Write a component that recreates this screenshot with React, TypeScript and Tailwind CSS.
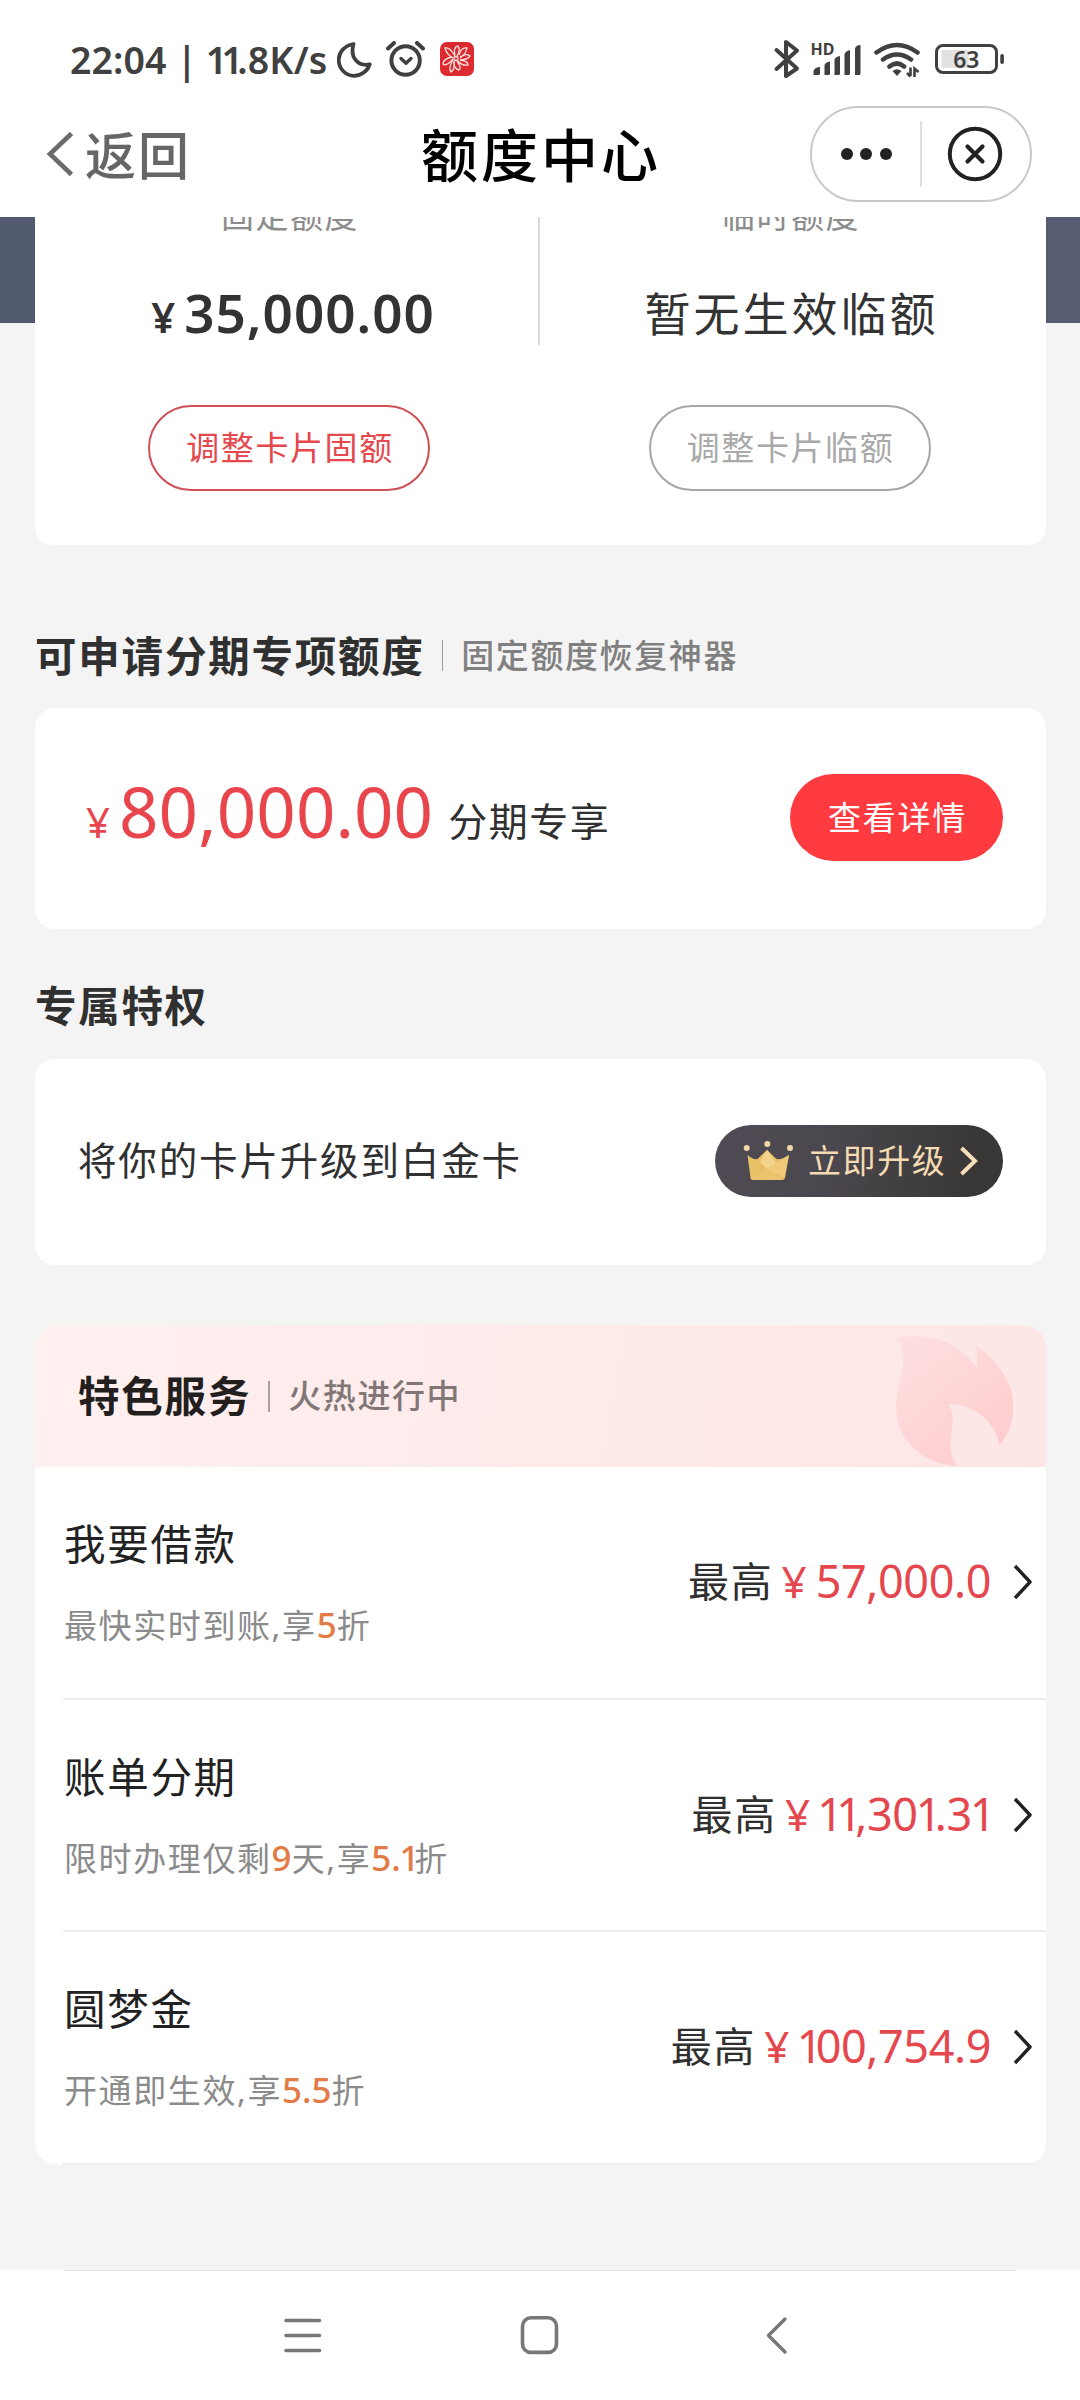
import React from "react";

/* Sets runs of the figure "1" tighter than the other digits. */
function Num({ children }: { children: string }) {
  return (
    <>
      {children.split(/(1+)/).map((part, i) =>
        part.startsWith("1") ? (
          <span key={i} className="-ml-[0.04em] tracking-[-0.15em]">
            {part}
          </span>
        ) : (
          <React.Fragment key={i}>{part}</React.Fragment>
        ),
      )}
    </>
  );
}

function StatusBar() {
  return (
    <div className="flex h-[92px] items-start pt-[36px] pl-[70px] text-[#404040]">
      <div className="h-[46px] w-[267px] whitespace-pre text-[37.5px] leading-[47px] font-semibold tracking-[0.1px]">
        22:04 | <Num>11</Num>.8K/s
      </div>
      <svg className="mt-[5px] h-[38px] w-[140px]" viewBox="337 41 140 38" fill="none">
        <path
          d="M353.500 44C343 46 338.700 53.500 338.700 60C338.700 69 346 75.800 354 75.800C361.500 75.800 367.500 71 369.700 64.300C359 67 349.500 58.500 353.500 44Z"
          stroke="#404040"
          strokeWidth="3.800"
          strokeLinejoin="round"
        />
        <circle cx="405.600" cy="60.500" r="14.200" stroke="#404040" strokeWidth="4" />
        <path d="M388 48.500L394 43M423 48.500L417 43" stroke="#404040" strokeWidth="4" strokeLinecap="round" />
        <path d="M401 58.500L406 63.300L411 58.500" stroke="#404040" strokeWidth="3.400" strokeLinecap="round" strokeLinejoin="round" />
        <rect x="440" y="42" width="34" height="34" rx="7" fill="#db2a30" />
        <g stroke="#ffe2e0" strokeWidth="1.300">
          <path d="M455 56Q450 47 445 48Q447 55 453 58" />
          <path d="M455 55Q453 47 458 46Q461 50 457 56" />
          <path d="M459 55Q461 47 467 48Q466 54 460 58" />
          <path d="M460 57Q467 53 470 56Q467 60 460 60" />
          <path d="M460 60Q468 61 468 65Q462 66 458 61" />
          <path d="M457 61Q462 68 459 70Q454 69 454 62" />
          <path d="M454 61Q455 70 451 72Q448 68 453 60" />
          <path d="M453 59Q446 67 443 64Q443 59 452 57" />
          <circle cx="456" cy="58.500" r="2" />
        </g>
      </svg>
      <svg className="mt-[3px] ml-[294px] h-[42px] w-[234px]" viewBox="771 39 234 42" fill="none">
        <path
          d="M776.500 50L797 68.500L786 76V42L797 50.500L776.500 69"
          stroke="#404040"
          strokeWidth="4"
          strokeLinecap="round"
          strokeLinejoin="round"
        />
        <text x="810.500" y="55" fontSize="16" fontWeight="700" fill="#404040" textLength="24" fontFamily="Noto Sans, sans-serif">
          HD
        </text>
        <path
          d="M813.500 75V71Q815 67 820 67V73.500Q820 75 818.500 75ZM824.500 75V65Q825.500 62 830 61.500V73.500Q830 75 828.500 75ZM834.500 75V59.500Q835.500 56.500 840 56V73.500Q840 75 838.500 75ZM844.500 75V54Q845.500 51 850 50V73.500Q850 75 848.500 75ZM855 75V48.500Q856 45 860.500 45V73.500Q860.500 75 859 75Z"
          fill="#404040"
        />
        <path d="M876.500 52.500Q897 37.500 917.500 52.500M883 59.500Q897 49.500 911 59.500M889.500 66.500Q897 60.500 904 66.500" stroke="#404040" strokeWidth="4.600" strokeLinecap="round" />
        <path d="M892.500 71Q897 67.500 901.500 71L897 76Z" fill="#404040" />
        <path d="M910.500 67.500V76M907 73L910.500 76.500M914.500 77V68.500L918.500 72" stroke="#404040" strokeWidth="2.600" />
        <rect x="936.500" y="45.500" width="60" height="27" rx="6.500" stroke="#404040" strokeWidth="3" />
        <rect x="941.500" y="50" width="27" height="18" rx="2" fill="#e2e2e2" />
        <rect x="1000.300" y="54" width="3.600" height="10" rx="1.700" fill="#404040" />
        <text x="966.300" y="67.800" fontSize="23" fontWeight="600" fill="#404040" textAnchor="middle" fontFamily="Noto Sans, sans-serif">
          63
        </text>
      </svg>
    </div>
  );
}

function TitleBar() {
  return (
    <div className="flex h-[125px] items-start pt-[14px] pl-[46px]">
      <svg className="mt-[25px] h-[46px] w-[30px]" viewBox="0 0 30 46" fill="none">
        <path d="M25.500 2.500L4 23L25.500 43.500" stroke="#6b6b6b" strokeWidth="4.600" />
      </svg>
      <div className="-mt-[1px] ml-[9px] w-[150px] text-[51px] leading-[100px] font-medium tracking-[2px] text-[#666666]">返回</div>
      <div className="-mt-[1px] ml-[186px] w-[389px] text-[57px] leading-[100px] font-medium tracking-[3px] text-black">额度中心</div>
      <div className="flex h-[96px] w-[222px] items-center rounded-full border-2 border-[#c9c9c9]">
        <div className="flex w-[108px] items-center justify-center gap-[7.500px]">
          <span className="h-[12px] w-[12px] rounded-full bg-[#222222]" />
          <span className="h-[12px] w-[12px] rounded-full bg-[#222222]" />
          <span className="h-[12px] w-[12px] rounded-full bg-[#222222]" />
        </div>
        <div className="h-[66px] w-[1.500px] bg-[#e0e0e0]" />
        <svg className="ml-[25px] h-[56px] w-[56px]" viewBox="0 0 56 56" fill="none" stroke="#222222">
          <circle cx="28" cy="28" r="25.200" strokeWidth="4" />
          <path d="M20.500 20.500L35.500 35.500M35.500 20.500L20.500 35.500" strokeWidth="4.200" strokeLinecap="round" />
        </svg>
      </div>
    </div>
  );
}

function LimitCard() {
  return (
    <div className="h-[328px] overflow-hidden bg-[linear-gradient(to_right,#525a70,#565c72)] bg-[length:100%_106px] bg-no-repeat px-[35px]">
      <div className="mr-[-1px] flex h-[328px] rounded-b-[17px] bg-white">
        <div className="flex w-[508px] flex-col items-center">
          <div className="-mt-[25px] ml-[2px] h-[48px] text-[33px] leading-[48px] tracking-[1.500px] text-[#8c8c8c]">固定额度</div>
          <div className="mt-[35px] ml-[8px] flex h-[76px] items-baseline leading-[76px] font-semibold text-[#333333]">
            <span className="text-[42px]">¥</span>
            <span className="ml-[9px] text-[53px] tracking-[1px]">35,000.00</span>
          </div>
          <button className="mt-[54px] h-[86px] w-[282px] rounded-full border-2 border-[#cf4f56] pl-[2px] text-[33px] tracking-[1.600px] text-[#e5484d]">
            调整卡片固额
          </button>
        </div>
        <div className="-ml-[5px] h-[128px] w-[2px] bg-[#d9d9d9]" />
        <div className="flex w-[499px] flex-col items-center">
          <div className="-mt-[25px] ml-[3px] h-[48px] text-[33px] leading-[48px] tracking-[1.500px] text-[#8c8c8c]">临时额度</div>
          <div className="mt-[35px] ml-[4px] h-[76px] text-[46px] leading-[76px] tracking-[3px] text-[#333333]">暂无生效临额</div>
          <button className="mt-[54px] h-[86px] w-[282px] rounded-full border-2 border-[#a6a6a6] pl-[2px] text-[33px] tracking-[1.600px] text-[#a9a9a9]">
            调整卡片临额
          </button>
        </div>
      </div>
    </div>
  );
}

function InstallmentSection() {
  return (
    <>
      <div className="flex h-[163px] items-center pt-[58px] pl-[35px]">
        <h2 className="text-[41.500px] leading-[60px] font-bold tracking-[1.800px] text-[#303030]">可申请分期专项额度</h2>
        <span className="ml-[17px] h-[31px] w-[1.500px] bg-[#999999]" />
        <span className="ml-[18px] text-[33px] leading-[60px] font-medium tracking-[1.600px] text-[#808080]">固定额度恢复神器</span>
      </div>
      <div className="mr-[34px] ml-[35px] flex h-[221px] rounded-[20px] bg-white pl-[51px]">
        <div className="flex h-[221px] w-[704px] items-baseline pt-[58px] leading-[90px] text-[#e8454c]">
          <span className="text-[42px]">¥</span>
          <span className="ml-[9px] text-[69px] tracking-[0.1px]">80,000.00</span>
          <span className="relative -top-[2px] ml-[15px] text-[39px] tracking-[1.500px] text-[#303030]">分期专享</span>
        </div>
        <button className="mt-[66px] h-[87px] w-[213px] rounded-full bg-[#ff3b3f] pl-[2px] text-[33px] tracking-[1.700px] text-white">查看详情</button>
      </div>
    </>
  );
}

function PrivilegeSection() {
  return (
    <>
      <h2 className="mt-[47px] ml-[35px] h-[83px] text-[41.500px] leading-[60px] font-bold tracking-[1.700px] text-[#303030]">专属特权</h2>
      <div className="mr-[34px] ml-[35px] flex h-[206px] items-center justify-between rounded-[20px] bg-white pr-[43px] pl-[43px]">
        <span className="-mt-[2px] text-[38.500px] tracking-[1.850px] text-[#303030]">将你的卡片升级到白金卡</span>
        <button className="mt-[-2px] flex h-[72px] w-[288px] items-center rounded-full bg-[linear-gradient(100deg,#504b54_0%,#4b474e_40%,#383735_90%)] pl-[27px] text-[#f4dab0]">
          <svg className="h-[42px] w-[52px]" viewBox="742 1138 52 42">
            <path d="M747.500 1153Q753 1158 757.500 1157L767 1148L776.500 1157Q782 1158 789 1153L785 1176Q784.500 1178 782 1178H753Q750.500 1178 750.500 1176Z" fill="#e9bf68" />
            <path d="M767 1148L760 1160L767 1167L776 1161Z" fill="#f3d48c" />
            <path d="M789 1153L767 1167L784 1176Z" fill="#f0ca78" />
            <path d="M750.500 1176L767 1167L783 1178H753Z" fill="#ecc46e" />
            <circle cx="746.700" cy="1146" r="3" fill="#f0d8a8" />
            <circle cx="767.300" cy="1142" r="3" fill="#f0d8a8" />
            <circle cx="790" cy="1146" r="3" fill="#f0d8a8" />
          </svg>
          <span className="ml-[14px] text-[33px] tracking-[1.600px]">立即升级</span>
          <svg className="ml-[12px] h-[32px] w-[22px]" viewBox="0 0 22 32" fill="none">
            <path d="M3.500 3L17 16L3.500 29" stroke="#f6deb8" strokeWidth="4" />
          </svg>
        </button>
      </div>
    </>
  );
}

type Service = { title: string; desc: React.ReactNode; amount: string };

function Hot({ children }: { children: string }) {
  return (
    <span className="text-[35px] font-medium tracking-normal text-[#e27b45]">
      <Num>{children}</Num>
    </span>
  );
}

const services: Service[] = [
  { title: "我要借款", desc: <>最快实时到账,享<Hot>5</Hot>折</>, amount: "57,000.0" },
  { title: "账单分期", desc: <>限时办理仅剩<Hot>9</Hot>天,享<Hot>5.1</Hot>折</>, amount: "11,301.31" },
  { title: "圆梦金", desc: <>开通即生效,享<Hot>5.5</Hot>折</>, amount: "100,754.9" },
];

function ServicesCard() {
  return (
    <div className="mt-[60px] mr-[34px] ml-[35px] h-[840px] overflow-hidden rounded-[22px] bg-white">
      <div className="flex h-[142px] items-center bg-[linear-gradient(100deg,#fff0f0,#ffeaea_50%,#fce6e6)] pl-[43px]">
        <h2 className="text-[41.500px] leading-[60px] font-bold tracking-[1.800px] text-[#241f1f]">特色服务</h2>
        <span className="ml-[17px] h-[31px] w-[2px] bg-[#ab9f9f]" />
        <span className="ml-[18px] text-[33px] leading-[60px] font-medium tracking-[1.600px] text-[#827777]">火热进行中</span>
        <svg className="mr-[33px] ml-auto h-[142px] w-[118px]" viewBox="215 25 118 142">
          <defs>
            <linearGradient id="flame" x1="0" y1="0" x2="0.800" y2="1">
              <stop offset="0" stopColor="#fde0e1" />
              <stop offset="1" stopColor="#ffcbcd" />
            </linearGradient>
          </defs>
          <path
            d="M218 38C250 31 283 45 296.500 68C298 61 297 53 296 46C318 60 334 84 333.500 107C333.500 122 327 137 319.500 145C315 122 295 104 268.500 104C280 122 262 147 277 165.500C246 166 216 141 216 107C216 84 231 63 218 38Z"
            fill="url(#flame)"
          />
        </svg>
      </div>
      {services.map((s) => (
        <div key={s.title} className="ml-[28px] flex h-[232.500px] items-center border-b-2 border-[#ececec]">
          <div className="h-[160px] pl-[1px]">
            <div className="mt-[14px] text-[41.500px] leading-[56px] tracking-[1.700px] text-[#222222]">{s.title}</div>
            <div className="mt-[26px] text-[33px] leading-[54px] tracking-[1.600px] text-[#8b8b8b]">{s.desc}</div>
          </div>
          <div className="mt-[-1px] ml-auto flex items-baseline leading-[60px] text-[#e4474e]">
            <span className="relative -top-[1px] text-[41px] tracking-[1.700px] text-[#303030]">最高</span>
            <span className="ml-[8px] text-[44px]">¥</span>
            <span className="ml-[9px] text-[45px] tracking-[-0.400px]">
              <Num>{s.amount}</Num>
            </span>
          </div>
          <svg
            className={"mr-[12px] h-[38px] w-[22px] " + (s.amount.endsWith("1") ? "ml-[23px]" : "ml-[21px]")}
            viewBox="0 0 22 38"
            fill="none"
          >
            <path d="M3 3L18 19L3 35" stroke="#222222" strokeWidth="3.400" strokeLinejoin="round" />
          </svg>
        </div>
      ))}
    </div>
  );
}

function NavBar() {
  return (
    <div className="h-[130px] bg-white">
      <div className="mx-[64px] h-[1px] bg-[#e2e2e2]" />
      <svg className="mt-[38px] ml-[270px] h-[50px] w-[540px]" viewBox="270 2309 540 50" fill="none" stroke="#777777" strokeLinecap="round" strokeLinejoin="round">
        <path d="M286 2320.500H319.500M286 2335.500H319.500M286 2350.500H319.500" strokeWidth="3.600" />
        <rect x="522.500" y="2317.800" width="34" height="34.600" rx="8.500" strokeWidth="3.600" />
        <path d="M785 2319L768.500 2335.500L785 2352" strokeWidth="3.400" />
      </svg>
    </div>
  );
}

export default function App() {
  return (
    <div className="h-[2400px] w-[1080px] overflow-hidden bg-[#f4f4f4] font-['Noto_Sans','Noto_Sans_CJK_SC',sans-serif]">
      <div className="relative z-10 bg-white">
        <StatusBar />
        <TitleBar />
      </div>
      <LimitCard />
      <InstallmentSection />
      <PrivilegeSection />
      <ServicesCard />
      <div className="h-[105px]" />
      <NavBar />
    </div>
  );
}
